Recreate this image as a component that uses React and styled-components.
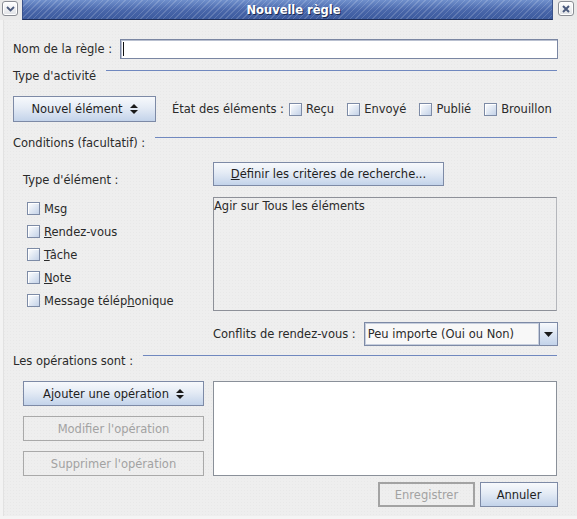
import React from 'react';
import styled, { createGlobalStyle } from 'styled-components';

const GlobalStyle = createGlobalStyle`
    html, body {
        margin: 0;
        padding: 0;
        background: #eeeeee;
    }
    body {
        font-family: "DejaVu Sans", "Liberation Sans", sans-serif;
        font-size: 11.5px;
        color: #2a2a2a;
    }
`;

const Window = styled.div`
    width: 577px;
    height: 519px;
    box-sizing: border-box;
    display: flex;
    flex-direction: column;
    background-color: #eeeeee;
    background-image: radial-gradient(rgba(0, 0, 0, 0.025) 1px, transparent 1px);
    background-size: 3px 3px;
    border-bottom: 3px solid #f4f4f4;
    box-shadow: inset 3px 0 0 #f3f3f3, inset 4px 0 0 #e2e2e2;
    overflow: hidden;
`;

const TitleBar = styled.div`
    display: flex;
    align-items: flex-start;
    height: 20px;
    background: #e9e9e9;
`;

const WinButton = styled.div`
    width: 16px;
    height: 15px;
    margin-top: 1px;
    margin-left: ${p => p.$left}px;
    box-sizing: border-box;
    border: 1px solid #8a8d94;
    border-radius: 3px;
    background: linear-gradient(#ffffff, #e0e2e6);
    box-shadow: inset 0 0 0 1px #ffffff;
    display: flex;
    align-items: center;
    justify-content: center;
`;

const TitleStrip = styled.div`
    width: 531px;
    height: 20px;
    margin-left: 4px;
    box-sizing: border-box;
    border-bottom: 1px solid #1f2f5a;
    border-left: 1px solid #3a528a;
    border-right: 1px solid #3a528a;
    background:
        repeating-linear-gradient(135deg, rgba(255, 255, 255, 0.16) 0 1px, transparent 1px 4px),
        linear-gradient(#7090cc, #4866aa 55%, #3d5b9e);
    display: flex;
    align-items: center;
    justify-content: center;
    padding-left: 12px;
    color: #ffffff;
    font-weight: bold;
    font-size: 11.5px;
    text-shadow: 1px 1px 0 #1c2c55;
`;

const Content = styled.div`
    display: flex;
    flex-direction: column;
    padding: 0 19px 0 13px;
`;

const NameRow = styled.div`
    display: flex;
    align-items: center;
    height: 20px;
    margin-top: 19px;
`;

const NameLabel = styled.span`
    width: 107px;
    white-space: nowrap;
`;

const TextInput = styled.div`
    flex: 1;
    height: 20px;
    box-sizing: border-box;
    background: #ffffff;
    border: 1px solid #7a86a2;
    box-shadow: inset 1px 1px 0 #b9c0d0;
    display: flex;
    align-items: center;
    padding-left: 2px;
`;

const Caret = styled.span`
    width: 1px;
    height: 14px;
    background: #111111;
`;

const SectionTitle = styled.div`
    display: flex;
    height: 14px;
    line-height: 14px;
    margin-top: ${p => p.$top}px;
    white-space: nowrap;
`;

const Rule = styled.div`
    flex: 1;
    height: 1px;
    margin: 1px 1px 0 10px;
    background: #7088bf;
`;

const ActivityRow = styled.div`
    display: flex;
    align-items: center;
    height: 26px;
    margin-top: 13px;
`;

const Button = styled.div`
    width: ${p => p.$w}px;
    height: ${p => p.$h || 25}px;
    margin-top: ${p => p.$top || 0}px;
    box-sizing: border-box;
    display: flex;
    align-items: center;
    justify-content: center;
    gap: 7px;
    white-space: nowrap;
    border: 1px solid #7d8aa6;
    background: linear-gradient(#f7f9fc, #e4ebf5 45%, #c3d3ea);
    color: #1e1e1e;
    flex-shrink: 0;
`;

const DisabledButton = styled(Button)`
    border: ${p => (p.$default ? '2px solid #a3a3a3' : '1px solid #a9a9a9')};
    background: transparent;
    color: #a2a2a2;
`;

const StateLabel = styled.span`
    margin-left: 16px;
    margin-right: 5px;
    white-space: nowrap;
`;

const CheckGroup = styled.div`
    display: flex;
    align-items: center;
    gap: 13px;
`;

const CheckItem = styled.label`
    display: flex;
    align-items: center;
    gap: 4px;
    height: ${p => p.$h || 16}px;
    white-space: nowrap;
`;

const Box = styled.span`
    width: 13px;
    height: 13px;
    box-sizing: border-box;
    border: 1px solid #7d8ba6;
    background: linear-gradient(135deg, #ffffff, #dbe4f1 60%, #c4d2e8);
    box-shadow: inset 1px 1px 0 #ffffff;
    flex-shrink: 0;
`;

const Split = styled.div`
    display: flex;
    margin-top: ${p => p.$top || 0}px;
`;

const LeftCol = styled.div`
    width: 200px;
    padding-left: 10px;
    box-sizing: border-box;
    display: flex;
    flex-direction: column;
    flex-shrink: 0;
    gap: ${p => p.$gap || 0}px;
`;

const RightCol = styled.div`
    flex: 1;
    display: flex;
    flex-direction: column;
`;

const SubLabel = styled.div`
    margin-top: 23px;
    line-height: 14px;
`;

const CheckList = styled.div`
    display: flex;
    flex-direction: column;
    margin-top: 10px;
    padding-left: 4px;
`;

const Summary = styled.div`
    height: 114px;
    margin-top: 11px;
    margin-right: 1px;
    box-sizing: border-box;
    border: 1px solid #8d9098;
    border-right-color: #b4b6bb;
    line-height: 14px;
    padding-top: 1px;
`;

const ComboRow = styled.div`
    display: flex;
    align-items: center;
    height: 24px;
    margin-top: 11px;
    white-space: nowrap;
`;

const Combo = styled.div`
    flex: 1;
    height: 24px;
    margin-left: 8px;
    box-sizing: border-box;
    display: flex;
    border: 1px solid #7d8aa6;
    background: #f8f8f8;
`;

const ComboText = styled.div`
    flex: 1;
    display: flex;
    align-items: center;
    padding-left: 2px;
    border: 1px solid #c6cedd;
`;

const ComboArrow = styled.div`
    width: 17px;
    border-left: 1px solid #7d8aa6;
    background: linear-gradient(#f7f9fc, #dfe7f3 45%, #c3d3ea);
    display: flex;
    align-items: center;
    justify-content: center;
`;

const OpsList = styled.div`
    height: 95px;
    margin-right: 1px;
    box-sizing: border-box;
    background: #ffffff;
    border: 1px solid #8a9099;
`;

const Footer = styled.div`
    display: flex;
    justify-content: flex-end;
    gap: 5px;
    margin-top: 6px;
`;

const SortIcon = () => (
    <svg width="8" height="10" viewBox="0 0 8 10">
        <polygon points="0,4 8,4 4,0" fill="#1a1a1a" />
        <polygon points="0,6 8,6 4,10" fill="#1a1a1a" />
    </svg>
);

const Check = ({ children, h }) => (
    <CheckItem $h={h}>
        <Box />
        <span>{children}</span>
    </CheckItem>
);

const App = () => {
    return (
        <>
            <GlobalStyle />
            <Window>
                <TitleBar>
                    <WinButton $left={2}>
                        <svg width="9" height="6" viewBox="0 0 9 6">
                            <polyline points="1,1 4.5,4.5 8,1" fill="none" stroke="#4b5a7c" strokeWidth="1.8" />
                        </svg>
                    </WinButton>
                    <TitleStrip>Nouvelle règle</TitleStrip>
                    <WinButton $left={5}>
                        <svg width="8" height="8" viewBox="0 0 8 8">
                            <path d="M1 1 L7 7 M7 1 L1 7" stroke="#4b5a7c" strokeWidth="2" />
                        </svg>
                    </WinButton>
                </TitleBar>

                <Content>
                    <NameRow>
                        <NameLabel>Nom de la règle :</NameLabel>
                        <TextInput><Caret /></TextInput>
                    </NameRow>

                    <SectionTitle $top={10}>
                        Type d'activité<Rule />
                    </SectionTitle>

                    <ActivityRow>
                        <Button $w={143} $h={26}>Nouvel élément <SortIcon /></Button>
                        <StateLabel>État des éléments :</StateLabel>
                        <CheckGroup>
                            <Check>Reçu</Check>
                            <Check>Envoyé</Check>
                            <Check>Publié</Check>
                            <Check>Brouillon</Check>
                        </CheckGroup>
                    </ActivityRow>

                    <SectionTitle $top={14}>
                        Conditions (facultatif) :<Rule />
                    </SectionTitle>

                    <Split>
                        <LeftCol>
                            <SubLabel>Type d'élément :</SubLabel>
                            <CheckList>
                                <Check h={23}>Msg</Check>
                                <Check h={23}><u>R</u>endez-vous</Check>
                                <Check h={23}><u>T</u>âche</Check>
                                <Check h={23}><u>N</u>ote</Check>
                                <Check h={23}>Message télép<u>h</u>onique</Check>
                            </CheckList>
                        </LeftCol>
                        <RightCol>
                            <Button $w={231} $h={24} $top={12}>
                                <span><u>D</u>éfinir les critères de recherche...</span>
                            </Button>
                            <Summary>Agir sur Tous les éléments</Summary>
                            <ComboRow>
                                Conflits de rendez-vous :
                                <Combo>
                                    <ComboText>Peu importe (Oui ou Non)</ComboText>
                                    <ComboArrow>
                                        <svg width="9" height="5" viewBox="0 0 9 5">
                                            <polygon points="0,0 9,0 4.5,5" fill="#1a1a1a" />
                                        </svg>
                                    </ComboArrow>
                                </Combo>
                            </ComboRow>
                        </RightCol>
                    </Split>

                    <SectionTitle $top={8}>
                        Les opérations sont :<Rule />
                    </SectionTitle>

                    <Split $top={13}>
                        <LeftCol $gap={10}>
                            <Button $w={181}>Ajouter une opération <SortIcon /></Button>
                            <DisabledButton $w={181}>Modifier l'opération</DisabledButton>
                            <DisabledButton $w={181}>Supprimer l'opération</DisabledButton>
                        </LeftCol>
                        <RightCol>
                            <OpsList />
                        </RightCol>
                    </Split>

                    <Footer>
                        <DisabledButton $w={97} $default>Enregistrer</DisabledButton>
                        <Button $w={78}>Annuler</Button>
                    </Footer>
                </Content>
            </Window>
        </>
    );
};

export default App;
